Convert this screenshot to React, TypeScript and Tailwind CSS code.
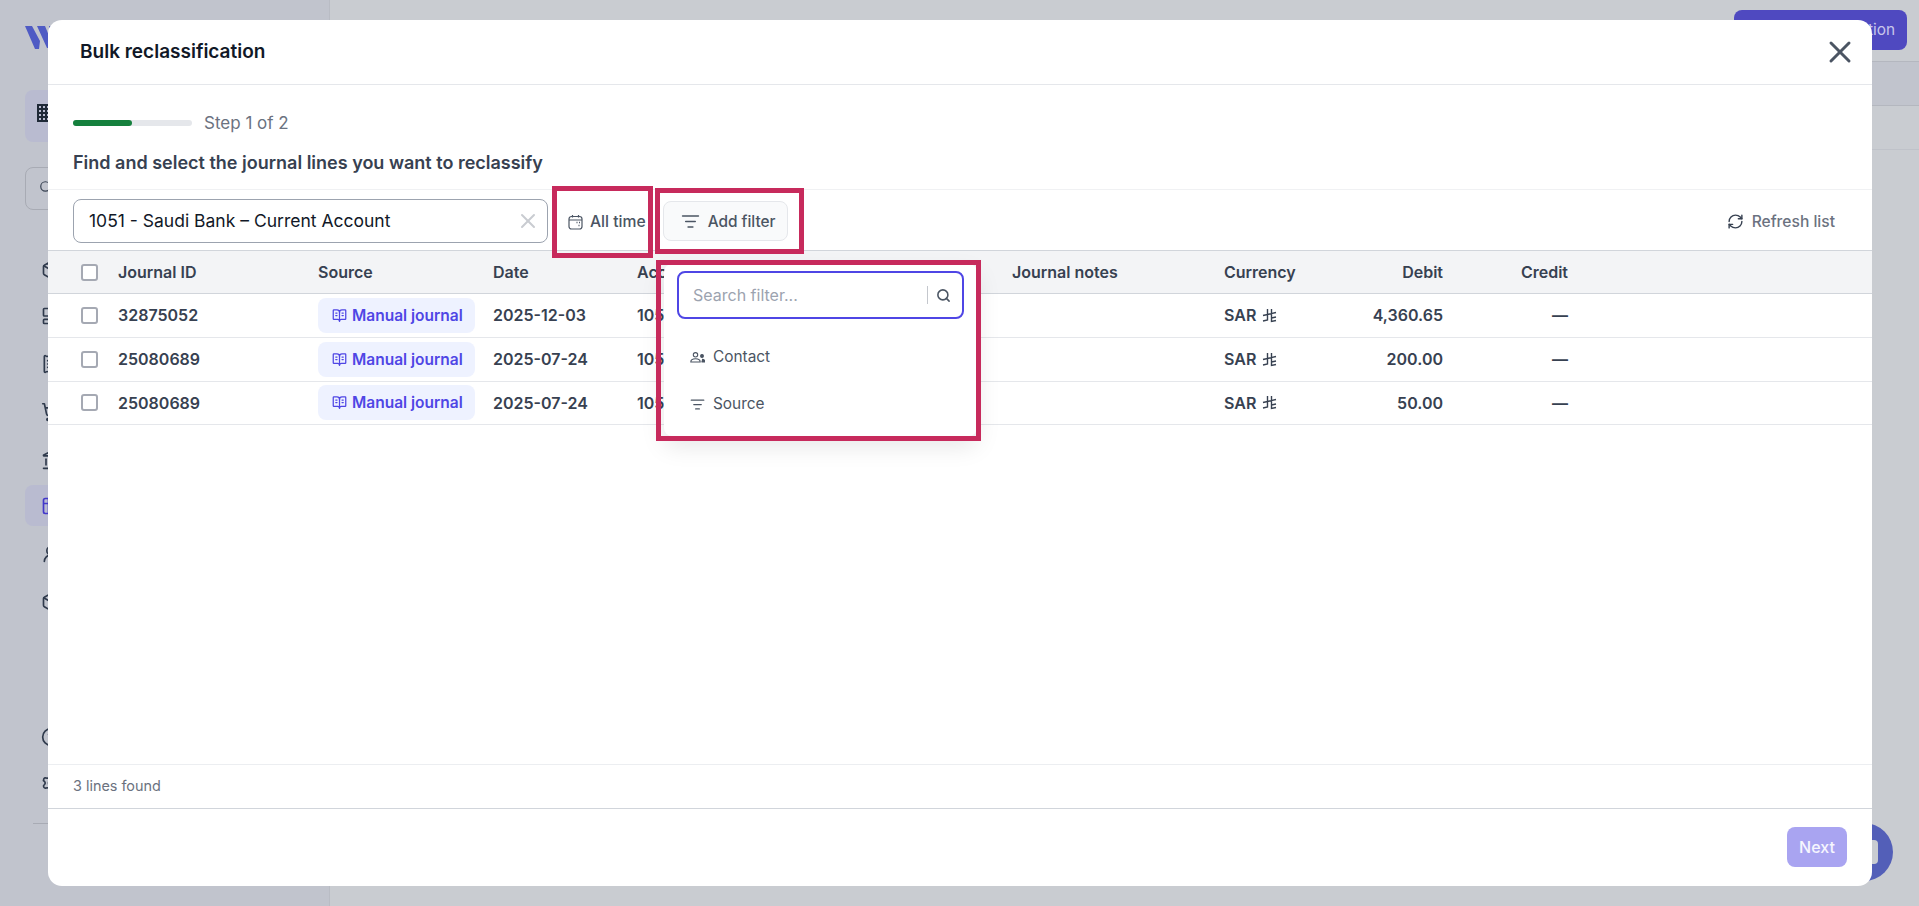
import {
  BookOpenText,
  Box,
  CircleHelp,
  Landmark,
  LayoutDashboard,
  ListFilter,
  Package,
  ReceiptText,
  RefreshCw,
  Search,
  Settings,
  ShoppingCart,
  Table2,
  UserRound,
  X,
} from 'lucide-react'

const rows = [
  { id: '32875052', date: '2025-12-03', debit: '4,360.65' },
  { id: '25080689', date: '2025-07-24', debit: '200.00' },
  { id: '25080689', date: '2025-07-24', debit: '50.00' },
]

const gridCols = 'grid grid-cols-[70px_200px_175px_144px_375px_212px_100px_119px_125px_1fr] items-center'

const Checkbox = () => (
  <div className="ml-[33px] h-[17px] w-[17px] rounded-[3px] border-2 border-[#a5a9b3] bg-white" />
)

const RiyalIcon = () => (
  <svg width="15" height="15" viewBox="0 0 15 15" fill="none" stroke="#374151" strokeWidth="1.4">
    <path d="M5.5 1v11L1 13M9.5 1v12.5l4.5-1M1 7.5l13-3M9.5 10l4.5-1" />
  </svg>
)

const CalendarIcon = () => (
  <svg width="15" height="16" viewBox="0 0 15 16" fill="none" stroke="#4b5563" strokeWidth="1.2">
    <rect x="1" y="2.5" width="13" height="12.5" rx="2.5" />
    <path d="M1 6h13M4.5 1v2.5M10.5 1v2.5" />
    <path d="M8.5 8.5h1M11 8.5h1M10.5 11.5h1" strokeWidth="1.4" />
  </svg>
)

const ContactIcon = () => (
  <svg width="15" height="11" viewBox="0 0 15 11" fill="none" stroke="#4b5563" strokeWidth="1.1">
    <circle cx="5.5" cy="2.8" r="2.2" />
    <path d="M.8 10c0-2.2 2-3.2 4.7-3.2s4.7 1 4.7 3.2z" />
    <circle cx="12" cy="4" r="1.4" fill="#4b5563" />
    <path d="M11.5 10H15c0-1.6-1-2.6-3-2.6" fill="#4b5563" />
  </svg>
)

const BuildingIcon = () => (
  <svg width="24" height="18" viewBox="0 0 24 18" fill="#1f2937">
    <path d="M0 0h24v18H0z" />
    <path
      fill="#b9bbd0"
      d="M2 2h2v2H2zM6 2h2v2H6zM10 2h2v2h-2zM2 6h2v2H2zM6 6h2v2H6zM10 6h2v2h-2zM2 10h2v2H2zM6 10h2v2H6zM10 10h2v2h-2zM2 14h2v2H2zM6 14h2v2H6zM10 14h2v2h-2z"
    />
  </svg>
)

const Logo = () => (
  <svg width="50" height="25" viewBox="0 0 50 25" fill="#4f5bc4">
    <path d="M0 1h7l8 15-1 8h-4zM12 1h8l9 22h-7zM24 1h8l-5 14z" />
  </svg>
)

const SideIcon = ({ children, className = '' }: { children: React.ReactNode; className?: string }) => (
  <div className={`flex items-center pl-[16px] text-[#2f3a4c] ${className}`}>{children}</div>
)

const Sidebar = () => (
  <aside className="flex h-full w-[330px] shrink-0 flex-col border-r border-[#b9bcc4] bg-[#c1c4cd] pl-[25px]">
    <div className="mt-[25px] h-[40px]">
      <Logo />
    </div>
    <div className="mt-[25px] flex h-[52px] w-[280px] items-center rounded-lg bg-[#b9bbd0] pb-[6px] pl-[12px]">
      <BuildingIcon />
    </div>
    <div className="mt-[25px] flex h-[43px] w-[280px] items-center rounded-lg border border-[#a8abb4] pb-[3px] pl-[13px] text-[#374151]">
      <Search size={14} />
    </div>
    <div className="mt-[50px] flex flex-col">
      <SideIcon className="h-[20px]"><Package size={20} /></SideIcon>
      <SideIcon className="mt-[26px] h-[20px]"><LayoutDashboard size={20} /></SideIcon>
      <SideIcon className="mt-[28px] h-[20px]"><ReceiptText size={20} /></SideIcon>
      <SideIcon className="mt-[28px] h-[20px]"><ShoppingCart size={20} /></SideIcon>
      <SideIcon className="mt-[28px] h-[20px]"><Landmark size={20} /></SideIcon>
      <div className="mt-[15px] flex h-[41px] w-[280px] items-center rounded-lg bg-[#b9bbd0] pl-[16px] text-[#4338ca]">
        <Table2 size={20} />
      </div>
      <SideIcon className="mt-[18px] h-[20px]"><UserRound size={20} /></SideIcon>
      <SideIcon className="mt-[28px] h-[20px]"><Box size={20} /></SideIcon>
    </div>
    <div className="mt-auto flex flex-col">
      <SideIcon className="h-[20px]"><CircleHelp size={20} /></SideIcon>
      <SideIcon className="mt-[26px] h-[20px]"><Settings size={20} /></SideIcon>
      <div className="mb-[82px] ml-[8px] mt-[30px] h-px w-[270px] bg-[#a8abb4]" />
    </div>
  </aside>
)

const Background = () => (
  <main className="flex min-w-0 flex-1 flex-col">
    <div className="flex h-[62px] justify-end border-b border-[#b4b7bf] pr-[12px] pt-[10px]">
      <div className="flex h-[40px] w-[173px] items-center justify-end rounded-lg bg-[#4f49c0] pr-[12px] text-[15.4px] text-[#c8c6ea]">
        Add transaction
      </div>
    </div>
    <div className="h-[44px] border-b border-[#b4b7bf] bg-[#c1c4cd]" />
    <div className="h-[44px] border-b border-[#bfc2c9]" />
  </main>
)

const FilterDropdown = () => (
  <div className="absolute left-[616px] top-[244px] h-[172px] w-[313px] rounded-lg bg-white px-[13px] pt-[7px] shadow-[0_10px_25px_rgba(0,0,0,0.1)]">
    <div className="flex h-[48px] items-center rounded-lg border-2 border-[#4f46e5] pl-[14px] pr-[11px]">
      <span className="flex-1 text-base text-[#9ca3af]">Search filter...</span>
      <div className="h-[18px] w-px bg-[#c4c7cd]" />
      <Search size={15} className="ml-[8px] text-[#4b5563]" strokeWidth={2.5} />
    </div>
    <div className="mt-[26px] flex h-[24px] items-center gap-[8px] pl-[13px] text-[15.4px] text-[#4b5563]">
      <ContactIcon />
      <span>Contact</span>
    </div>
    <div className="mt-[23px] flex h-[24px] items-center gap-[8px] pl-[13px] text-[15.4px] text-[#4b5563]">
      <ListFilter size={15} />
      <span>Source</span>
    </div>
  </div>
)

const App = () => {
  return (
    <div className="relative flex h-[906px] w-full overflow-hidden bg-[#c9ccd1] font-['Inter',sans-serif]">
      <Sidebar />
      <Background />

      <div className="absolute left-[1835px] top-[823px] flex h-[58px] w-[58px] items-center justify-end rounded-full bg-[#535fb8] pr-[15px]">
        <div className="h-[24px] w-[24px] rounded bg-[#c9ccd1]" />
      </div>

      <div className="absolute left-[48px] top-[20px] flex h-[866px] w-[1824px] flex-col rounded-[14px] bg-white">
        <div className="flex h-[65px] shrink-0 items-center justify-between border-b border-[#e5e7eb] pl-[32px] pr-[14px]">
          <h2 className="pt-px text-[19px] font-semibold text-[#111827]">Bulk reclassification</h2>
          <X size={36} className="text-[#4b5563]" strokeWidth={2} />
        </div>

        <div className="flex h-[104px] shrink-0 flex-col px-[25px]">
          <div className="mt-[26px] flex h-[24px] items-center">
            <div className="h-[6px] w-[119px] rounded-full bg-[#e5e7eb]">
              <div className="h-full w-[59px] rounded-full bg-[#15803d]" />
            </div>
            <span className="ml-[12px] pt-[2px] text-[17px] text-[#6b7280]">Step 1 of 2</span>
          </div>
          <h3 className="mt-[16px] text-lg font-semibold leading-[24px] text-[#374151]">
            Find and select the journal lines you want to reclassify
          </h3>
        </div>

        <div className="flex h-[61px] shrink-0 items-start border-t border-[#f0f1f3] pl-[25px] pr-[37px] pt-[9px]">
          <div className="flex h-[44px] w-[475px] items-center justify-between rounded-lg border border-[#9ca3af] pl-[15px] pr-[7px] text-[17.5px] text-[#111827]">
            <span>1051 - Saudi Bank – Current Account</span>
            <X size={24} className="text-[#c9ccd1]" strokeWidth={2} />
          </div>
          <div className="ml-[20px] flex h-[44px] items-center gap-[7px] pt-px text-[15.7px] font-medium text-[#4b5563]">
            <CalendarIcon />
            <span>All time</span>
          </div>
          <div className="ml-[17px] mt-[2px] flex h-[40px] w-[125px] items-center gap-[8px] rounded-lg border border-[#e5e7eb] bg-[#f9fafb] pl-[17px] pt-px text-[15.4px] font-medium text-[#4b5563]">
            <ListFilter size={19} />
            <span>Add filter</span>
          </div>
          <div className="ml-auto flex h-[44px] items-center gap-[8px] pt-px text-[15.6px] font-medium text-[#6b7280]">
            <RefreshCw size={17} className="text-[#374151]" />
            <span>Refresh list</span>
          </div>
        </div>

        <div className={`${gridCols} h-[44px] shrink-0 border-y border-[#d1d5db] bg-[#f3f4f6] text-base font-semibold text-[#374151]`}>
          <Checkbox />
          <div>Journal ID</div>
          <div>Source</div>
          <div>Date</div>
          <div>Account</div>
          <div>Journal notes</div>
          <div>Currency</div>
          <div className="text-right">Debit</div>
          <div className="text-right">Credit</div>
        </div>

        <div className="flex min-h-0 flex-1 flex-col">
          {rows.map((row, i) => (
            <div key={i} className={`${gridCols} h-[43.8px] shrink-0 border-b border-[#e5e7eb] text-base font-semibold text-[#374151]`}>
              <Checkbox />
              <div>{row.id}</div>
              <div>
                <div className="flex h-[35px] w-[157px] items-center gap-[5px] rounded-lg bg-[#eef2ff] pl-[14px] text-[15.5px] font-semibold text-[#4f46e5]">
                  <BookOpenText size={15} />
                  <span>Manual journal</span>
                </div>
              </div>
              <div>{row.date}</div>
              <div className="whitespace-nowrap">1051 - Saudi Bank – Current Account</div>
              <div />
              <div className="flex items-center gap-[6px]">
                <span>SAR</span>
                <RiyalIcon />
              </div>
              <div className="text-right">{row.debit}</div>
              <div className="text-right font-bold">—</div>
            </div>
          ))}
        </div>

        <div className="flex h-[44px] shrink-0 items-center border-t border-[#eceef1] pb-px pl-[25px] text-[14.4px] text-[#6b7280]">
          3 lines found
        </div>
        <div className="flex h-[78px] shrink-0 items-start justify-end border-t border-[#d1d5db] pr-[25px] pt-[18px]">
          <div className="flex h-[40px] w-[60px] items-center justify-center rounded-lg bg-[#a9a4f1] text-base font-medium text-white/90">
            Next
          </div>
        </div>

        <FilterDropdown />

        <div className="pointer-events-none absolute left-[504px] top-[166px] h-[72px] w-[101px] border-[5px] border-[#c72a5c]" />
        <div className="pointer-events-none absolute left-[607px] top-[168px] h-[66px] w-[149px] border-[5px] border-[#c72a5c]" />
        <div className="pointer-events-none absolute left-[608px] top-[240px] h-[181px] w-[325px] border-[5px] border-[#c72a5c]" />
      </div>
    </div>
  )
}

export default App
